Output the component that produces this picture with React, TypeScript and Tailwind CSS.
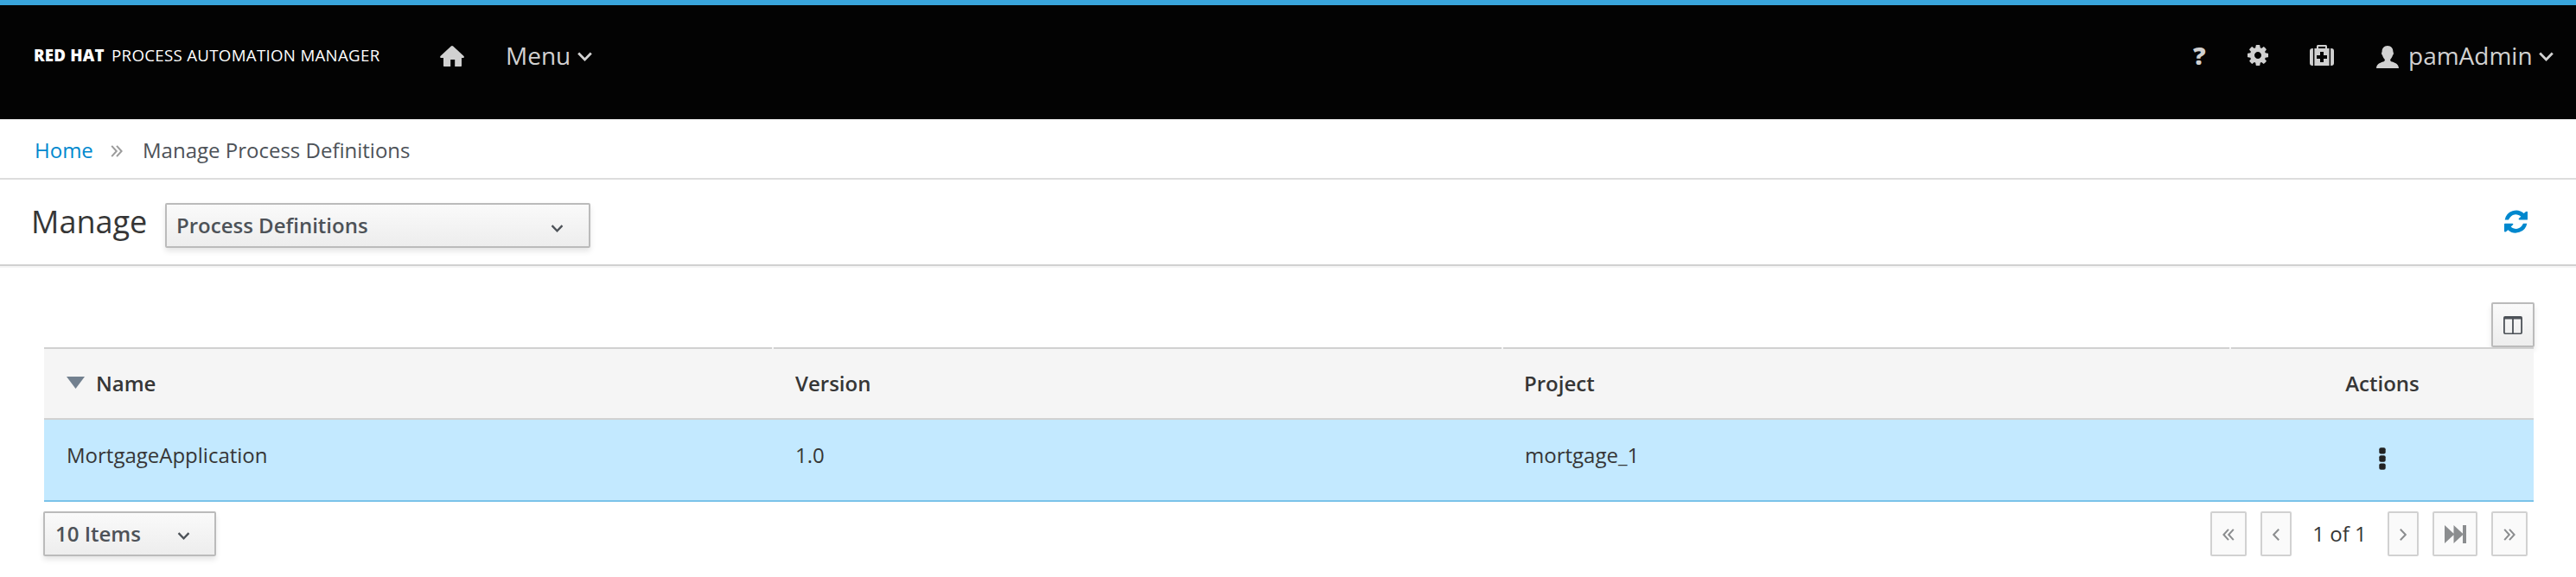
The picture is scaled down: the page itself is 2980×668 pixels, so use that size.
import React from "react";

type IconProps = { className?: string };

const ChevronDown = ({ className = "" }: IconProps) => (
  <svg viewBox="0 0 17 11" className={className} fill="none" stroke="currentColor" strokeWidth="2.8">
    <path d="M1.200 1.400 8.500 8.900l7.300-7.500" />
  </svg>
);

const HomeIcon = ({ className = "" }: IconProps) => (
  <svg viewBox="0 0 28 24" className={className} fill="currentColor">
    <path d="M14 0c.5 0 .9.3 1.2.6L27.300 11.800c1 1 .7 2.200-.700 2.200H25v9c0 .6-.4 1-1 1h-6.800v-8h-5v8H5c-.6 0-1-.4-1-1v-9H1.600C.2 14-.3 12.800.7 11.800L12.800.6c.3-.3.700-.6 1.200-.6z" />
  </svg>
);

const GearIcon = ({ className = "" }: IconProps) => (
  <svg viewBox="0 0 1536 1536" className={className} fill="currentColor">
    <path d="M1024 768q0-106-75-181t-181-75-181 75-75 181 75 181 181 75 181-75 75-181zm512-109v222q0 12-8 23t-20 13l-185 28q-19 54-39 91 35 50 107 138 10 12 10 25t-9 23q-27 37-99 108t-94 71q-12 0-26-9l-138-108q-44 23-91 38-16 136-29 186-7 28-36 28H657q-14 0-24.500-8.500T621 1506l-28-184q-49-16-90-37l-141 107q-10 9-25 9-14 0-25-11-126-114-165-168-7-10-7-23 0-12 8-23 15-21 51-66.500t54-70.500q-27-50-41-99L29 913q-13-2-21-12.500T0 877V655q0-12 8-23t19-13l186-28q14-46 39-92-40-57-107-138-10-12-10-24 0-10 9-23 26-36 98.500-107.500T337 135q13 0 26 10l138 107q44-23 91-38 16-136 29-186 7-28 36-28h222q14 0 24.500 8.500T915 30l28 184q49 16 90 37l142-107q9-9 24-9 13 0 25 10 129 119 165 170 7 8 7 22 0 12-8 23-15 21-51 66.500t-54 70.500q26 50 41 98l183 28q13 2 21 12.500t8 23.500z" />
  </svg>
);

const MedkitIcon = ({ className = "" }: IconProps) => (
  <svg viewBox="0 0 28 24" className={className} fill="currentColor" fillRule="evenodd">
    <path d="M3 4h.9v20H3a3 3 0 0 1-3-3V7a3 3 0 0 1 3-3zM24.100 4h.9a3 3 0 0 1 3 3v14a3 3 0 0 1-3 3h-.9z" />
    <path d="M5.400 4H8V1.600C8 .7 8.700 0 9.600 0h8.800c.9 0 1.600.7 1.600 1.600V4h2.600v20H5.400zM10 4h8V2h-8zM12 8v4H8v4h4v4h4v-4h4v-4h-4V8z" />
  </svg>
);

const UserIcon = ({ className = "" }: IconProps) => (
  <svg viewBox="0 0 26 26" className={className} fill="currentColor">
    <path d="M13 0c4.300 0 6.400 3 6.400 6.600 0 1 .8 1.200.5 2.700-.2 1-.8 1.300-1.100 2.200-.6 1.900-1.300 3-2.500 4.200-.5 1.700.3 2.300 2 2.900 4.300 1.500 7.300 2.800 7.700 7.400H0c.4-4.600 3.400-5.900 7.700-7.400 1.700-.6 2.500-1.200 2-2.900-1.200-1.200-1.900-2.300-2.500-4.200-.3-.9-.9-1.200-1.100-2.200-.3-1.500.5-1.700.5-2.700C6.600 3 8.700 0 13 0z" />
  </svg>
);

const RefreshIcon = ({ className = "" }: IconProps) => (
  <svg viewBox="0 0 81 81" className={className} fill="currentColor">
    <path d="M2 34.500A40 40 0 0 1 68 12l7-6q6-3 6 2v24q0 2.500-2.500 2.500H53q-5 0-2-5l7-6.500A25.500 25.500 0 0 0 17 31l-2 3.500z" />
    <path d="M79 47A40 40 0 0 1 13 69.500l-7 6q-6 3-6-2v-24Q0 47 2.500 47H28q5 0 2 5l-7 6.500A25.500 25.500 0 0 0 64 50.500L66 47z" />
  </svg>
);

const ColumnsIcon = ({ className = "" }: IconProps) => (
  <svg viewBox="0 0 22 21" className={className} fill="currentColor" fillRule="evenodd">
    <path d="M2 0h18a2 2 0 0 1 2 2v17a2 2 0 0 1-2 2H2a2 2 0 0 1-2-2V2a2 2 0 0 1 2-2zM1.800 3.400v15.400q0 .7.700.7h7.600V3.400zM11.900 3.400v16.100h7.600q.7 0 .7-.7V3.400z" />
  </svg>
);

const KebabIcon = ({ className = "" }: IconProps) => (
  <svg viewBox="0 0 8 26" className={className} fill="currentColor">
    <rect x=".3" y=".2" width="7.400" height="7.400" rx="2" />
    <rect x=".3" y="9.300" width="7.400" height="7.400" rx="2" />
    <rect x=".3" y="18.400" width="7.400" height="7.400" rx="2" />
  </svg>
);

const DoubleAngle = ({ className = "" }: IconProps) => (
  <svg viewBox="0 0 14 14" className={className} fill="none" stroke="currentColor" strokeWidth="2">
    <path d="M1.200.8 6.800 7l-5.600 6.200M7 .8 12.600 7 7 13.200" />
  </svg>
);

const Angle = ({ className = "" }: IconProps) => (
  <svg viewBox="0 0 8 14" className={className} fill="none" stroke="currentColor" strokeWidth="2">
    <path d="M.8.8 6.800 7l-6 6.200" />
  </svg>
);

const FastForward = ({ className = "" }: IconProps) => (
  <svg viewBox="0 0 25 21" className={className} fill="currentColor">
    <path d="M0 0 10.500 9.800V0L21 9.800V0h4v21h-4V11.200L10.500 21v-9.800L0 21z" />
  </svg>
);

const buttonLook =
  "rounded-[2px] border-2 border-[#bbb] bg-linear-to-b from-[#fafafa] to-[#ededed] text-[#4d5258] shadow-[0_4px_6px_rgba(3,3,3,0.1)]";
const pagerLook =
  "flex h-[52px] items-center justify-center rounded-[2px] border-2 border-[#d1d1d1] bg-[#fafafa] text-[#8b8d8f]";
const headCell = "flex h-[82px] items-center border-t-2 border-[#d1d1d1] pb-[1px] font-semibold";

export default function App() {
  return (
    <div className="flex h-[668px] w-[2980px] flex-col overflow-hidden bg-white font-['Open_Sans',sans-serif] text-[24px] leading-[32px] text-[#363636]">
      <header className="flex h-[138px] items-start border-t-[6px] border-[#39a5dc] bg-[#030303] text-[#d1d1d1]">
        <div className="ml-[39px] mt-[42px] flex h-[32px] w-[470px] items-center whitespace-nowrap text-[18.7px] text-white">
          <span className="w-[90px] font-extrabold tracking-[0.2px]">RED HAT</span>
          <span className="font-medium tracking-[0.3px]">PROCESS AUTOMATION MANAGER</span>
        </div>
        <HomeIcon className="mt-[47px] h-[24px] w-[28px]" />
        <nav className="ml-[48px] mt-[42px] flex h-[32px] items-center text-[28px]">
          <span className="w-[83px]">Menu</span>
          <ChevronDown className="mt-[3px] h-[11px] w-[17px]" />
        </nav>
        <div className="ml-auto flex items-start pr-[26px]">
          <span className="mt-[42px] w-[63px] text-[29px] font-extrabold leading-[32px]">?</span>
          <GearIcon className="mt-[46px] size-[24px]" />
          <MedkitIcon className="ml-[48px] mt-[46px] h-[24px] w-[28px]" />
          <UserIcon className="ml-[49px] mt-[47px] size-[26px]" />
          <span className="ml-[11px] mt-[42px] w-[151px] text-[28px] leading-[32px]">pamAdmin</span>
          <ChevronDown className="mt-[54px] h-[11px] w-[17px]" />
        </div>
      </header>

      <div className="flex h-[70px] items-center border-b-2 border-[#ddd] pl-[40px] pt-[3px] text-[#4d5258]">
        <span className="w-[88px] text-[#0088ce]">Home</span>
        <DoubleAngle className="mt-[3px] size-[14px] text-[#9c9c9c]" />
        <span className="ml-[23px]">Manage Process Definitions</span>
      </div>

      <div className="flex h-[100px] items-start border-b-2 border-[#d1d1d1] pl-[36px] pr-[56px]">
        <h1 className="mt-[29px] w-[155px] text-[36px] leading-[40px]">Manage</h1>
        <div className={`mt-[27px] flex h-[52px] w-[492px] items-center justify-between pl-[11px] pr-[29px] ${buttonLook}`}>
          <span className="font-semibold">Process Definitions</span>
          <ChevronDown className="mt-[6px] h-[9px] w-[15px]" />
        </div>
        <RefreshIcon className="ml-auto mt-[35px] size-[27px] text-[#0088ce]" />
      </div>
      <div className="h-[2px] bg-[#f5f5f5]" />

      <div className="flex h-[92px] items-end justify-end pr-[48px]">
        <button className={`flex h-[52px] w-[50px] items-center justify-center ${buttonLook}`}>
          <ColumnsIcon className="mt-[1px] h-[21px] w-[22px]" />
        </button>
      </div>

      <div className="ml-[51px] w-[2880px]">
        <div className="flex gap-[2px] border-b-2 border-[#d1d1d1] bg-[#f5f5f5]">
          <div className={`w-[842px] pl-[26px] ${headCell}`}>
            <svg viewBox="0 0 21 14" className="mb-[1px] mr-[13px] h-[14px] w-[21px] fill-[#72808f]">
              <path d="M0 0h21L10.500 14z" />
            </svg>
            Name
          </div>
          <div className={`w-[842px] pl-[25px] ${headCell}`}>Version</div>
          <div className={`w-[840px] pl-[24px] ${headCell}`}>Project</div>
          <div className={`grow justify-center ${headCell}`}>Actions</div>
        </div>
        <div className="flex h-[95px] items-start border-b-2 border-[#7bc3e9] bg-[#c3e9ff] pt-[25px]">
          <div className="w-[842px] pl-[26px]">MortgageApplication</div>
          <div className="w-[844px] pl-[27px]">1.0</div>
          <div className="w-[842px] pl-[27px]">mortgage_1</div>
          <div className="flex grow justify-center pl-[2px] pt-[7px] text-[#222]">
            <KebabIcon className="h-[26px] w-[8px]" />
          </div>
        </div>
      </div>

      <div className="mt-[11px] flex h-[52px] items-center pl-[50px] pr-[56px]">
        <div className={`flex h-[52px] w-[200px] items-center justify-between pl-[12px] pr-[28px] ${buttonLook}`}>
          <span className="font-semibold">10 Items</span>
          <ChevronDown className="mt-[5px] h-[9px] w-[15px]" />
        </div>
        <div className="ml-auto flex items-center">
          <button className={`w-[42px] ${pagerLook}`}>
            <DoubleAngle className="mt-[2px] size-[14px] rotate-180" />
          </button>
          <button className={`ml-[16px] w-[36px] ${pagerLook}`}>
            <Angle className="mt-[2px] h-[14px] w-[8px] rotate-180" />
          </button>
          <span className="w-[111px] text-center">1 of 1</span>
          <button className={`w-[36px] ${pagerLook}`}>
            <Angle className="mt-[2px] h-[14px] w-[8px]" />
          </button>
          <button className={`ml-[16px] w-[52px] ${pagerLook}`}>
            <FastForward className="h-[21px] w-[25px]" />
          </button>
          <button className={`ml-[16px] w-[42px] ${pagerLook}`}>
            <DoubleAngle className="mt-[2px] size-[14px]" />
          </button>
        </div>
      </div>
    </div>
  );
}
